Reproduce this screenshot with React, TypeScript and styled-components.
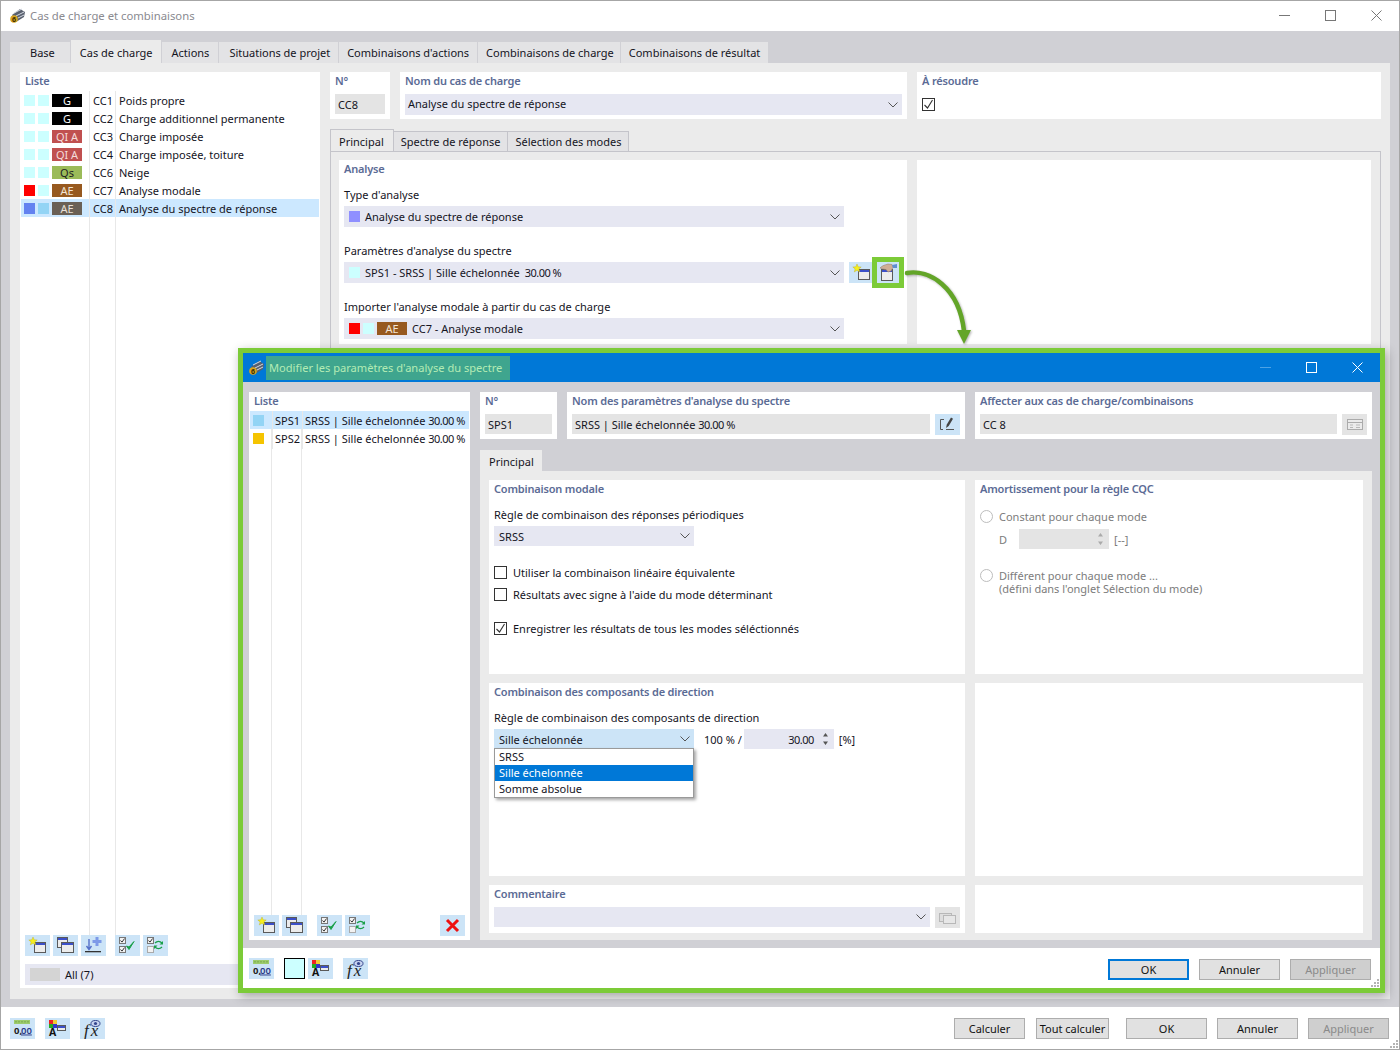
import React from "react"
import styled, { createGlobalStyle, css } from "styled-components"

const FONT = `"Noto Sans", "Open Sans", sans-serif`
const GRAY = "#d0d0d5"
const PAGE = "#ebebeb"
const LAVENDER = "#e6e7f2"
const HOVER = "#cce4f7"
const GREEN = "#7ccb38"

const GlobalStyle = createGlobalStyle`
  html, body { margin: 0; padding: 0; background: #fff; }
  * { box-sizing: border-box; }
  body { font-family: ${FONT}; font-size: 11px; color: #14141e; }
`

type IconName = "new" | "copy" | "import" | "checkAll" | "checkSwap" | "remove" | "decimal" | "colorA" | "fx" | "pencil" | "table" | "hand" | "comment"

function Win({ x, y, w = 12, h = 10 }: { x: number; y: number; w?: number; h?: number }) {
  return (
    <>
      <rect x={x + 0.5} y={y + 0.5} width={w} height={h} fill="#ececec" stroke="#5a5a5a" />
      <rect x={x + 1} y={y + 1} width={w - 1} height={2} fill="#3c50c8" />
    </>
  )
}

function Check({ x, y, on = true }: { x: number; y: number; on?: boolean }) {
  return (
    <>
      <rect x={x + 0.5} y={y + 0.5} width={6} height={6} fill="#f2f2f2" stroke={on ? "#777" : "#aaa"} />
      {on && <path d={`M${x + 1.5} ${y + 3.5}l1.5 1.6 2.6-3.6`} fill="none" stroke="#333" />}
    </>
  )
}

function Glyph({ name }: { name: IconName }) {
  switch (name) {
    case "new":
      return (
        <>
          <Win x={9} y={7} w={11} />
          <path d="M8 2l1.2 2.8 3 .2-2.3 1.9.8 3L8 8.3 5.3 9.9l.8-3L3.800 5l3-.2z" fill="#f5ee1e" stroke="#b8a820" strokeWidth="0.4" />
        </>
      )
    case "copy":
      return (
        <>
          <Win x={4} y={2} w={10} />
          <Win x={8} y={7} w={12} />
        </>
      )
    case "import":
      return (
        <>
          <path d="M8 4v10M5.500 11l2.500 3.500 2.500-3.500" fill="none" stroke="#5570c8" strokeWidth="1.4" />
          <path d="M14.500 2h3v3h3v3h-3v3h-3V8h-3V5h3z" fill="#7d9ae8" />
          <rect x="4" y="16" width="16" height="1.3" fill="#333" />
        </>
      )
    case "checkAll":
      return (
        <>
          <Check x={4} y={2} />
          <Check x={4} y={11} />
          <path d="M11.500 11l2.500 3.500 5-8-5 5.500z" fill="#1aa04a" stroke="#1aa04a" strokeWidth="1" />
        </>
      )
    case "checkSwap":
      return (
        <>
          <Check x={4} y={2} />
          <Check x={4} y={11} on={false} />
          <path d="M12 8c2-2 5-2 7 0M19 12c-2 2-5 2-7 0" fill="none" stroke="#1aa04a" strokeWidth="1.3" />
          <path d="M20 6v3.500h-3.500zM11 14v-3.500h3.500z" fill="#1aa04a" />
        </>
      )
    case "remove":
      return <path d="M7 5l11 11M18 5L7 16" stroke="#ee1111" strokeWidth="3" fill="none" />
    case "decimal":
      return (
        <>
          <rect x="4" y="2" width="16" height="4" fill="#9ccb6c" />
          <path d="M6 3v1.500M9 3v1.500M12 3v1.500M15 3v1.500M18 3v1.500" stroke="#6f9f44" />
          <text x="4" y="15.500" fontFamily={FONT} fontSize="9.500" fontWeight="700" fill="#222">0,</text>
          <text x="11" y="15.500" fontFamily={FONT} fontSize="9.500" fontWeight="600" fill="#2a3a88" textDecoration="underline">00</text>
        </>
      )
    case "colorA":
      return (
        <>
          <rect x="4" y="2" width="4" height="4" fill="#e22" />
          <rect x="8" y="2" width="4" height="4" fill="#ec3" />
          <rect x="4" y="6" width="4" height="4" fill="#2a2" />
          <rect x="8" y="6" width="4" height="4" fill="#33c" />
          <text x="4" y="18" fontFamily={FONT} fontSize="10.500" fontWeight="700" fill="#111">A</text>
          <Win x={12} y={7} w={8} h={5} />
        </>
      )
    case "fx":
      return (
        <>
          <text x="4" y="18" fontFamily='"Liberation Serif", serif' fontSize="17" fontStyle="italic" letterSpacing="2" fill="#222">fx</text>
          <ellipse cx="15.500" cy="5.500" rx="4.500" ry="3" fill="#c8d4f0" stroke="#34448c" />
          <circle cx="15.500" cy="5.500" r="1.600" fill="#34448c" />
        </>
      )
    case "pencil":
      return (
        <>
          <path d="M9 5.500H5.500v10H8M11 15.500h8" fill="none" stroke="#555" />
          <path d="M11 14l.8-3.400L16 3.500l2 1.200-4.300 7.200z" fill="#444" />
        </>
      )
    case "table":
      return (
        <>
          <rect x="5.500" y="5.500" width="15" height="10" fill="#eee" stroke="#999" />
          <path d="M6 8.500h14" stroke="#999" />
          <path d="M8 11h3M14 11h4M8 13.500h3M14 13.500h4" stroke="#aaa" />
        </>
      )
    case "comment":
      return (
        <>
          <rect x="4.500" y="6.500" width="12" height="8" fill="#ddd" stroke="#aaa" />
          <rect x="8.500" y="8.500" width="12" height="8" fill="#e8e8e8" stroke="#aaa" />
        </>
      )
    case "hand":
      return (
        <>
          <Win x={4} y={7} w={11} h={11} />
          <path d="M3 6c3-3 5-3 8-4l4 .5 1 3-2 3.500-3 1-2-2.500-3-.5z" fill="#cfae96" stroke="#8f7666" strokeWidth="0.5" />
          <path d="M15 3l5-1v4h-4z" fill="#5f8fd0" />
        </>
      )
  }
}

function Icon({ name }: { name: IconName }) {
  return (
    <svg width="25" height="21" viewBox="0 0 25 21" aria-hidden="true">
      <Glyph name={name} />
    </svg>
  )
}

function Chevron() {
  return (
    <svg width="10" height="6" viewBox="0 0 10 6" aria-hidden="true">
      <path d="M.5.5L5 5 9.5.5" fill="none" stroke="#555" />
    </svg>
  )
}

function Spin({ muted }: { muted?: boolean }) {
  const c = muted ? "#aaa" : "#555"
  return (
    <svg width="7" height="14" viewBox="0 0 7 14" aria-hidden="true">
      <path d="M3.500 1L6 4.500H1zM3.500 13L1 9.500h5z" fill={c} />
    </svg>
  )
}

function Grip() {
  return (
    <GripMark width="9" height="9" viewBox="0 0 9 9" aria-hidden="true">
      <path d="M6 0h2v2H6zM3 3h2v2H3zM6 3h2v2H6zM0 6h2v2H0zM3 6h2v2H3zM6 6h2v2H6z" fill="#b4b4b4" />
    </GripMark>
  )
}

const Window = styled.div`
  position: relative;
  width: 1400px;
  height: 1050px;
  display: flex;
  flex-direction: column;
  background: ${GRAY};
  border: 1px solid #a6a6a6;
  overflow: hidden;
`
const TitleBar = styled.div`
  height: 30px;
  flex: none;
  background: #fff;
  display: flex;
  align-items: center;
  padding: 0 0 2px 8px;
  gap: 4px;
  font-size: 11.3px;
  color: #8a8a90;
`
const Controls = styled.div`
  margin-left: auto;
  display: flex;
  align-items: center;
  height: 100%;
`
const Control = styled.div`
  width: 46px;
  height: 100%;
  display: flex;
  align-items: center;
  justify-content: center;
`
const Body = styled.div`
  flex: 1;
  min-height: 0;
  display: flex;
  flex-direction: column;
  padding: 9px 9px 8px;
`
const TabStrip = styled.div`
  display: flex;
  align-items: flex-end;
  height: 23px;
  flex: none;
`
const TopTab = styled.div<{ $active?: boolean; $l: number; $r: number }>`
  height: ${(p) => (p.$active ? 23 : 21)}px;
  display: flex;
  align-items: center;
  padding: ${(p) => (p.$active ? 2 : 0)}px ${(p) => p.$r}px 0 ${(p) => p.$l}px;
  background: ${(p) => (p.$active ? PAGE : "#e3e3e5")};
  border-right: 1px solid ${GRAY};
  white-space: nowrap;
`
const TabPage = styled.div`
  flex: 1;
  min-height: 0;
  background: ${PAGE};
  padding: 9px 9px 11px 10px;
  display: grid;
  grid-template-columns: 300px 1fr;
  gap: 10px;
`
const ListPanel = styled.div`
  background: #fff;
  display: flex;
  flex-direction: column;
  min-height: 0;
  padding: 0 1px 3px;
`
const PanelTitle = styled.div<{ $flush?: boolean }>`
  height: 18px;
  line-height: 18px;
  padding-left: ${(p) => (p.$flush ? 0 : 4)}px;
  font-weight: 600;
  letter-spacing: -0.18px;
  color: #5b6b95;
  white-space: nowrap;
`
const ListBody = styled.div<{ $a: number; $b: number }>`
  flex: 1;
  min-height: 0;
  margin-top: 1px;
  background:
    linear-gradient(#e8e8e8, #e8e8e8) ${(p) => p.$a}px 0 / 1px 100% no-repeat,
    linear-gradient(#e8e8e8, #e8e8e8) ${(p) => p.$b}px 0 / 1px 100% no-repeat;
`
const ListRow = styled.div<{ $selected?: boolean; $cols: string }>`
  display: grid;
  grid-template-columns: ${(p) => p.$cols};
  height: 18px;
  align-items: center;
  white-space: nowrap;
  background: ${(p) => (p.$selected ? "#cce8ff" : "transparent")};
`
const SwatchCell = styled.div`
  display: flex;
  align-items: center;
  gap: 3px;
  padding: 0 0 2px 3px;
`
const TextCell = styled.div<{ $pad?: number }>`
  height: 100%;
  line-height: 20px;
  padding-left: ${(p) => p.$pad ?? 3}px;
  border-left: 1px solid #e8e8e8;
`
const Swatch = styled.span<{ $c: string }>`
  display: inline-block;
  flex: none;
  width: 11px;
  height: 11px;
  background: ${(p) => p.$c};
`
const Badge = styled.span<{ $bg: string; $fg?: string }>`
  display: inline-block;
  flex: none;
  width: 30px;
  height: 13px;
  line-height: 13px;
  text-align: center;
  background: ${(p) => p.$bg};
  color: ${(p) => p.$fg ?? "#fff"};
`
const Num = styled.span`
  letter-spacing: -0.5px;
`
const Toolbar = styled.div<{ $pad?: string }>`
  flex: none;
  display: flex;
  align-items: center;
  height: 21px;
  padding: ${(p) => p.$pad ?? 0};
`
const IconButton = styled.div<{ $w?: number; $gap?: number; $off?: boolean; $push?: boolean; $ring?: boolean }>`
  flex: none;
  width: ${(p) => p.$w ?? 25}px;
  height: 21px;
  background: ${(p) => (p.$off ? "#e4e4e4" : HOVER)};
  margin-left: ${(p) => (p.$push ? "auto" : `${p.$gap ?? 0}px`)};
  ${(p) =>
    p.$ring &&
    css`
      outline: 5px solid ${GREEN};
    `}
  svg {
    display: block;
    opacity: ${(p) => (p.$off ? 0.75 : 1)};
  }
`
const AllFilter = styled.div`
  flex: none;
  margin: 8px 4px 0;
  height: 21px;
  background: ${LAVENDER};
  display: flex;
  align-items: center;
  gap: 5px;
  padding-left: 5px;
`
const GrayChip = styled.span`
  width: 30px;
  height: 13px;
  background: #d4d4d4;
`
const RightCol = styled.div`
  min-width: 0;
  min-height: 0;
  display: flex;
  flex-direction: column;
`
const TopRow = styled.div<{ $cols: string }>`
  flex: none;
  display: grid;
  grid-template-columns: ${(p) => p.$cols};
  gap: 10px;
  height: 47px;
`
const Panel = styled.div`
  background: #fff;
  padding: 0 5px;
  min-width: 0;
  min-height: 0;
`
const TopTitle = styled(PanelTitle)`
  padding-left: 0;
  margin-bottom: 4px;
`
const FieldRow = styled.div`
  display: flex;
  gap: 5px;
`
const ReadOnly = styled.div`
  flex: 1;
  min-width: 0;
  height: 20px;
  line-height: 21px;
  padding-left: 3px;
  background: #e4e4e4;
  white-space: nowrap;
`
const Combo = styled.div<{ $w?: number; $open?: boolean; $h?: number; $pad?: number }>`
  flex: ${(p) => (p.$w ? "none" : 1)};
  width: ${(p) => (p.$w ? `${p.$w}px` : "auto")};
  height: ${(p) => p.$h ?? 21}px;
  background: ${(p) => (p.$open ? HOVER : LAVENDER)};
  display: flex;
  align-items: center;
  padding: 0 4px 0 ${(p) => p.$pad ?? 5}px;
  gap: 5px;
  white-space: nowrap;
  > svg {
    margin-left: auto;
    flex: none;
  }
`
const NameCombo = styled(Combo)`
  padding-bottom: 2px;
  > svg {
    margin-top: 2px;
  }
`
const ComboSwatches = styled.span`
  display: flex;
  align-items: center;
  gap: 3px;
`
const CheckBox = styled.span`
  display: inline-flex;
  align-items: center;
  justify-content: center;
  flex: none;
  width: 13px;
  height: 13px;
  border: 1px solid #333;
  background: #fff;
`
const SolveBox = styled(CheckBox)`
  margin-top: 4px;
`
const SubTabs = styled.div`
  flex: none;
  display: flex;
  align-items: flex-end;
  height: 23px;
  margin-top: 10px;
`
const SubTab = styled.div<{ $active?: boolean }>`
  height: ${(p) => (p.$active ? 23 : 21)}px;
  display: flex;
  align-items: center;
  padding: 0 ${(p) => (p.$active ? 9 : 7)}px 0 ${(p) => (p.$active ? 8 : 7)}px;
  background: ${(p) => (p.$active ? PAGE : "#e3e3e5")};
  border: 1px solid #c4c4ca;
  border-bottom: ${(p) => (p.$active ? "none" : "1px solid #c4c4ca")};
  border-left: ${(p) => (p.$active ? "1px solid #c4c4ca" : "none")};
  white-space: nowrap;
`
const SubPage = styled.div`
  flex: 1;
  min-height: 0;
  border: 1px solid #c4c4ca;
  border-bottom: none;
  margin-top: -1px;
  padding: 8px 9px 0 8px;
  display: grid;
  grid-template-columns: 568px 1fr;
  gap: 10px;
  grid-template-rows: 184px;
`
const FieldLabel = styled.div`
  height: 16px;
  line-height: 16px;
  margin-bottom: 3px;
  white-space: nowrap;
`
const FieldGroup = styled.div`
  margin-top: 16px;
  ${PanelTitle} + & {
    margin-top: 9px;
  }
`
const ComboLine = styled.div`
  display: flex;
  align-items: center;
  gap: 5px;
`
const ComboSlot = styled.div`
  width: 500px;
  flex: none;
  display: flex;
`
const Footer = styled.div`
  position: relative;
  flex: none;
  height: 42px;
  background: #fff;
  display: flex;
  align-items: center;
  padding: 0 10px 0 9px;
`
const Btn = styled.div<{ $w?: number; $gap?: number; $off?: boolean; $primary?: boolean }>`
  flex: none;
  width: ${(p) => p.$w ?? 81}px;
  height: 21px;
  margin-left: ${(p) => p.$gap ?? 10}px;
  display: flex;
  align-items: center;
  justify-content: center;
  background: ${(p) => (p.$off ? "#cfcfcf" : "#e1e1e1")};
  color: ${(p) => (p.$off ? "#8a8a8a" : "#111")};
  border: ${(p) => (p.$primary ? "2px solid #0078d7" : "1px solid #adadad")};
  white-space: nowrap;
`
const FootLeft = styled.div`
  display: flex;
  margin-right: auto;
`
const GripMark = styled.svg`
  position: absolute;
  right: 0;
  bottom: 0;
`

/* dialog floating over the main window */
const Dialog = styled.div`
  position: absolute;
  left: 237px;
  top: 347px;
  width: 1147px;
  height: 645px;
  border: 5px solid ${GREEN};
  display: flex;
  flex-direction: column;
  background: ${GRAY};
  box-shadow: 2px 3px 10px rgba(0, 0, 0, 0.3);
`
const DialogBar = styled.div`
  height: 29px;
  flex: none;
  background: #0078d7;
  display: flex;
  align-items: center;
  padding-left: 5px;
  font-size: 11.1px;
`
const Marked = styled.div`
  background: #3fa58e;
  color: #b4ecb4;
  height: 24px;
  line-height: 24px;
  padding: 0 8px 0 3px;
  margin-left: 1px;
  white-space: nowrap;
`
const DialogBody = styled.div`
  flex: 1;
  min-height: 0;
  display: grid;
  grid-template-columns: 221px 1fr;
  gap: 10px;
  padding: 10px 8px 8px 6px;
`
const DialogList = styled(ListPanel)`
  padding: 0 1px 4px;
`
const DialogTab = styled.div`
  flex: none;
  margin-top: 11px;
  width: 62px;
  height: 21px;
  background: ${PAGE};
  padding-left: 9px;
  line-height: 23px;
`
const DialogPage = styled.div`
  flex: 1;
  min-height: 0;
  background: ${PAGE};
  padding: 9px 9px 7px;
  display: grid;
  grid-template-columns: 476px 388px;
  grid-template-rows: 194px 193px 48px;
  gap: 9px 10px;
`
const Spacer = styled.div<{ $h: number }>`
  height: ${(p) => p.$h}px;
`
const Checkline = styled.div`
  height: 22px;
  display: flex;
  align-items: center;
  gap: 6px;
  white-space: nowrap;
`
const Spinner = styled.div<{ $muted?: boolean }>`
  width: 90px;
  height: 20px;
  flex: none;
  background: ${(p) => (p.$muted ? "#e4e4e4" : LAVENDER)};
  display: flex;
  align-items: center;
  justify-content: flex-end;
  gap: 8px;
  padding-right: 5px;
`
const ValueRow = styled.div`
  display: flex;
  align-items: center;
  white-space: nowrap;
  position: relative;
`
const Unit = styled.span<{ $gap: number; $muted?: boolean }>`
  margin-left: ${(p) => p.$gap}px;
  color: ${(p) => (p.$muted ? "#7c7c7c" : "inherit")};
`
const DropList = styled.div`
  position: absolute;
  left: 0;
  top: 19px;
  width: 200px;
  background: #fff;
  border: 1px solid #9a9a9a;
  box-shadow: 2px 2px 3px rgba(0, 0, 0, 0.35);
  z-index: 2;
`
const DropItem = styled.div<{ $selected?: boolean }>`
  height: 16px;
  line-height: 16px;
  padding-left: 4px;
  background: ${(p) => (p.$selected ? "#0078d7" : "#fff")};
  color: ${(p) => (p.$selected ? "#fff" : "inherit")};
`
const Radio = styled.span`
  flex: none;
  width: 13px;
  height: 13px;
  border: 1px solid #bdbdbd;
  border-radius: 50%;
  background: #fff;
`
const MutedLine = styled.div`
  display: flex;
  align-items: center;
  gap: 6px;
  height: 16px;
  color: #7c7c7c;
  white-space: nowrap;
`
const MutedNote = styled.div`
  height: 13px;
  line-height: 13px;
  margin: -1px 0 0 19px;
  color: #7c7c7c;
  white-space: nowrap;
`
const DamperRow = styled.div`
  display: flex;
  align-items: center;
  color: #7c7c7c;
  margin: 5px 0 0 19px;
`
const DialogFooter = styled.div`
  position: relative;
  flex: none;
  height: 40px;
  background: #fff;
  display: flex;
  align-items: center;
  padding: 1px 9px 0 6px;
  ${Btn} {
    margin-top: 2px;
  }
`
const ColorBox = styled.div`
  width: 21px;
  height: 21px;
  margin-left: 10px;
  margin-right: 3px;
  background: #ccffff;
  border: 1px solid #000;
`
const CurvedArrow = styled.svg`
  position: absolute;
  left: 900px;
  top: 260px;
  pointer-events: none;
  filter: drop-shadow(1px 1px 1px rgba(0, 0, 0, 0.3));
`

const CYAN = "#ccffff"
const loadCases = [
  { a: CYAN, b: CYAN, tag: "G", bg: "#000", code: "CC1", name: "Poids propre" },
  { a: CYAN, b: CYAN, tag: "G", bg: "#000", code: "CC2", name: "Charge additionnel permanente" },
  { a: CYAN, b: CYAN, tag: "QI A", bg: "#c05050", fg: "#f4dcdc", code: "CC3", name: "Charge imposée" },
  { a: CYAN, b: CYAN, tag: "QI A", bg: "#c05050", fg: "#f4dcdc", code: "CC4", name: "Charge imposée, toiture" },
  { a: CYAN, b: CYAN, tag: "Qs", bg: "#9bbb59", fg: "#222", code: "CC6", name: "Neige" },
  { a: "#ff0000", b: CYAN, tag: "AE", bg: "#97591f", fg: "#f2e4d4", code: "CC7", name: "Analyse modale" },
  { a: "#6382f0", b: "#93d4f5", tag: "AE", bg: "#6a6055", fg: "#e8e0d8", code: "CC8", name: "Analyse du spectre de réponse", selected: true },
]

const topTabs = [
  { label: "Base", l: 20, r: 15 },
  { label: "Cas de charge", l: 9, r: 8, active: true },
  { label: "Actions", l: 10, r: 9 },
  { label: "Situations de projet", l: 10, r: 8 },
  { label: "Combinaisons d'actions", l: 8, r: 8 },
  { label: "Combinaisons de charge", l: 8, r: 6 },
  { label: "Combinaisons de résultat", l: 8, r: 8 },
]

function TickMark() {
  return (
    <svg width="11" height="11" viewBox="0 0 11 11" aria-hidden="true">
      <path d="M1.500 6l3 3 5-8" fill="none" stroke="#333" strokeWidth="1.1" />
    </svg>
  )
}

function LogoMark() {
  return (
    <svg width="17" height="17" viewBox="0 0 17 17" aria-hidden="true">
      <path d="M3 8l8-6 5 3-1 5-8 5z" fill="#59606e" />
      <path d="M5 6l8-4M7 9l8-4M9 11l6-3" stroke="#d4d9e2" strokeWidth="1" />
      <circle cx="5" cy="12" r="3.800" fill="#d8a521" />
      <text x="3" y="15" fontFamily={FONT} fontSize="7" fontWeight="700" fill="#3a2a00">6</text>
    </svg>
  )
}

function WinButtons({ color, faded }: { color: string; faded?: string }) {
  return (
    <Controls>
      <Control>
        <svg width="11" height="11" viewBox="0 0 11 11" aria-hidden="true"><path d="M0 5.500h11" stroke={faded ?? color} /></svg>
      </Control>
      <Control>
        <svg width="11" height="11" viewBox="0 0 11 11" aria-hidden="true"><rect x=".5" y=".5" width="10" height="10" fill="none" stroke={color} /></svg>
      </Control>
      <Control>
        <svg width="11" height="11" viewBox="0 0 11 11" aria-hidden="true"><path d="M.5.5l10 10M10.500.5l-10 10" stroke={color} /></svg>
      </Control>
    </Controls>
  )
}

function SpectrumDialog() {
  const cols = "22px 30px 1fr"
  return (
    <Dialog>
      <DialogBar>
        <LogoMark />
        <Marked>Modifier les paramètres d'analyse du spectre</Marked>
        <WinButtons color="#fff" faded="#4da3e6" />
      </DialogBar>
      <DialogBody>
        <DialogList>
          <PanelTitle>Liste</PanelTitle>
          <ListBody $a={21} $b={51}>
            <ListRow $selected $cols={cols}>
              <SwatchCell><Swatch $c="#93d4f5" /></SwatchCell>
              <TextCell $pad={2}>SPS1</TextCell>
              <TextCell $pad={2}>SRSS | Sille échelonnée <Num>30.00 %</Num></TextCell>
            </ListRow>
            <ListRow $cols={cols}>
              <SwatchCell><Swatch $c="#f5c400" /></SwatchCell>
              <TextCell $pad={2}>SPS2</TextCell>
              <TextCell $pad={2}>SRSS | Sille échelonnée <Num>30.00 %</Num></TextCell>
            </ListRow>
          </ListBody>
          <Toolbar $pad="0 4px">
            <IconButton><Icon name="new" /></IconButton>
            <IconButton $gap={3}><Icon name="copy" /></IconButton>
            <IconButton $gap={10}><Icon name="checkAll" /></IconButton>
            <IconButton $gap={3}><Icon name="checkSwap" /></IconButton>
            <IconButton $push><Icon name="remove" /></IconButton>
          </Toolbar>
        </DialogList>
        <RightCol>
          <TopRow $cols="77px 398px 397px">
            <Panel>
              <TopTitle>N°</TopTitle>
              <ReadOnly>SPS1</ReadOnly>
            </Panel>
            <Panel>
              <TopTitle>Nom des paramètres d'analyse du spectre</TopTitle>
              <FieldRow>
                <ReadOnly>SRSS | Sille échelonnée <Num>30.00 %</Num></ReadOnly>
                <IconButton><Icon name="pencil" /></IconButton>
              </FieldRow>
            </Panel>
            <Panel>
              <TopTitle>Affecter aux cas de charge/combinaisons</TopTitle>
              <FieldRow>
                <ReadOnly>CC 8</ReadOnly>
                <IconButton $off><Icon name="table" /></IconButton>
              </FieldRow>
            </Panel>
          </TopRow>
          <DialogTab>Principal</DialogTab>
          <DialogPage>
            <Panel>
              <PanelTitle $flush>Combinaison modale</PanelTitle>
              <Spacer $h={9} />
              <FieldLabel>Règle de combinaison des réponses périodiques</FieldLabel>
              <Combo $w={200} $h={20}>SRSS<Chevron /></Combo>
              <Spacer $h={15} />
              <Checkline><CheckBox />Utiliser la combinaison linéaire équivalente</Checkline>
              <Checkline><CheckBox />Résultats avec signe à l'aide du mode déterminant</Checkline>
              <Spacer $h={12} />
              <Checkline><CheckBox><TickMark /></CheckBox>Enregistrer les résultats de tous les modes séléctionnés</Checkline>
            </Panel>
            <Panel>
              <PanelTitle $flush>Amortissement pour la règle CQC</PanelTitle>
              <Spacer $h={10} />
              <MutedLine><Radio />Constant pour chaque mode</MutedLine>
              <DamperRow>
                <span>D</span>
                <Unit $gap={12} />
                <Spinner $muted><Spin muted /></Spinner>
                <Unit $gap={5} $muted>[--]</Unit>
              </DamperRow>
              <Spacer $h={18} />
              <MutedLine><Radio />Différent pour chaque mode ...</MutedLine>
              <MutedNote>(défini dans l'onglet Sélection du mode)</MutedNote>
            </Panel>
            <Panel>
              <PanelTitle $flush>Combinaison des composants de direction</PanelTitle>
              <Spacer $h={9} />
              <FieldLabel>Règle de combinaison des composants de direction</FieldLabel>
              <ValueRow>
                <Combo $w={200} $h={20} $open>Sille échelonnée<Chevron /></Combo>
                <Unit $gap={10}>100 % /</Unit>
                <Unit $gap={2} />
                <Spinner><Num>30.00</Num><Spin /></Spinner>
                <Unit $gap={5}>[%]</Unit>
                <DropList>
                  <DropItem>SRSS</DropItem>
                  <DropItem $selected>Sille échelonnée</DropItem>
                  <DropItem>Somme absolue</DropItem>
                </DropList>
              </ValueRow>
            </Panel>
            <Panel />
            <Panel>
              <PanelTitle $flush>Commentaire</PanelTitle>
              <Spacer $h={4} />
              <FieldRow>
                <Combo $h={20}><Chevron /></Combo>
                <IconButton $off><Icon name="comment" /></IconButton>
              </FieldRow>
            </Panel>
            <Panel />
          </DialogPage>
        </RightCol>
      </DialogBody>
      <DialogFooter>
        <FootLeft>
          <IconButton><Icon name="decimal" /></IconButton>
          <ColorBox />
          <IconButton><Icon name="colorA" /></IconButton>
          <IconButton $gap={10}><Icon name="fx" /></IconButton>
        </FootLeft>
        <Btn $primary>OK</Btn>
        <Btn>Annuler</Btn>
        <Btn $off>Appliquer</Btn>
        <Grip />
      </DialogFooter>
    </Dialog>
  )
}

export default function App() {
  const cols = "68px 26px 1fr"
  return (
    <>
      <GlobalStyle />
      <Window>
        <TitleBar>
          <LogoMark />
          Cas de charge et combinaisons
          <WinButtons color="#777" />
        </TitleBar>
        <Body>
          <TabStrip>
            {topTabs.map((t) => (
              <TopTab key={t.label} $l={t.l} $r={t.r} $active={t.active}>{t.label}</TopTab>
            ))}
          </TabStrip>
          <TabPage>
            <ListPanel>
              <PanelTitle>Liste</PanelTitle>
              <ListBody $a={68} $b={94}>
                {loadCases.map((c) => (
                  <ListRow key={c.code} $selected={c.selected} $cols={cols}>
                    <SwatchCell>
                      <Swatch $c={c.a} />
                      <Swatch $c={c.b} />
                      <Badge $bg={c.bg} $fg={c.fg}>{c.tag}</Badge>
                    </SwatchCell>
                    <TextCell>{c.code}</TextCell>
                    <TextCell>{c.name}</TextCell>
                  </ListRow>
                ))}
              </ListBody>
              <Toolbar $pad="0 4px">
                <IconButton><Icon name="new" /></IconButton>
                <IconButton $gap={3}><Icon name="copy" /></IconButton>
                <IconButton $gap={3}><Icon name="import" /></IconButton>
                <IconButton $gap={9}><Icon name="checkAll" /></IconButton>
                <IconButton $gap={3}><Icon name="checkSwap" /></IconButton>
              </Toolbar>
              <AllFilter><GrayChip />All (7)</AllFilter>
            </ListPanel>
            <RightCol>
              <TopRow $cols="60px 507px 1fr">
                <Panel>
                  <TopTitle>N°</TopTitle>
                  <ReadOnly>CC8</ReadOnly>
                </Panel>
                <Panel>
                  <TopTitle>Nom du cas de charge</TopTitle>
                  <NameCombo $h={21} $pad={3}>Analyse du spectre de réponse<Chevron /></NameCombo>
                </Panel>
                <Panel>
                  <TopTitle>À résoudre</TopTitle>
                  <SolveBox><TickMark /></SolveBox>
                </Panel>
              </TopRow>
              <SubTabs>
                <SubTab $active>Principal</SubTab>
                <SubTab>Spectre de réponse</SubTab>
                <SubTab>Sélection des modes</SubTab>
              </SubTabs>
              <SubPage>
                <Panel>
                  <PanelTitle $flush>Analyse</PanelTitle>
                  <FieldGroup>
                    <FieldLabel>Type d'analyse</FieldLabel>
                    <ComboLine>
                      <ComboSlot>
                        <Combo><Swatch $c="#8f8fff" />Analyse du spectre de réponse<Chevron /></Combo>
                      </ComboSlot>
                    </ComboLine>
                  </FieldGroup>
                  <FieldGroup>
                    <FieldLabel>Paramètres d'analyse du spectre</FieldLabel>
                    <ComboLine>
                      <ComboSlot>
                        <Combo><Swatch $c={CYAN} />SPS1 - SRSS | Sille échelonnée <Num>30.00 %</Num><Chevron /></Combo>
                      </ComboSlot>
                      <IconButton $w={23}><Icon name="new" /></IconButton>
                      <IconButton $w={22} $ring><Icon name="hand" /></IconButton>
                    </ComboLine>
                  </FieldGroup>
                  <FieldGroup>
                    <FieldLabel>Importer l'analyse modale à partir du cas de charge</FieldLabel>
                    <ComboLine>
                      <ComboSlot>
                        <Combo>
                          <ComboSwatches>
                            <Swatch $c="#ff0000" />
                            <Swatch $c={CYAN} />
                            <Badge $bg="#97591f" $fg="#f2e4d4">AE</Badge>
                          </ComboSwatches>
                          CC7 - Analyse modale
                          <Chevron />
                        </Combo>
                      </ComboSlot>
                    </ComboLine>
                  </FieldGroup>
                </Panel>
                <Panel />
              </SubPage>
            </RightCol>
          </TabPage>
        </Body>
        <Footer>
          <FootLeft>
            <IconButton><Icon name="decimal" /></IconButton>
            <IconButton $gap={10}><Icon name="colorA" /></IconButton>
            <IconButton $gap={10}><Icon name="fx" /></IconButton>
          </FootLeft>
          <Btn $w={71}>Calculer</Btn>
          <Btn $w={73} $gap={11}>Tout calculer</Btn>
          <Btn $gap={17}>OK</Btn>
          <Btn>Annuler</Btn>
          <Btn $off>Appliquer</Btn>
          <Grip />
        </Footer>
        <SpectrumDialog />
        <CurvedArrow width="80" height="90" viewBox="0 0 80 90" aria-hidden="true">
          <path d="M6 12C28 8 58 26 63 70" fill="none" stroke="#63a528" strokeWidth="4.5" strokeLinecap="round" />
          <path d="M56 69h14l-7 14z" fill="#63a528" />
        </CurvedArrow>
      </Window>
    </>
  )
}
